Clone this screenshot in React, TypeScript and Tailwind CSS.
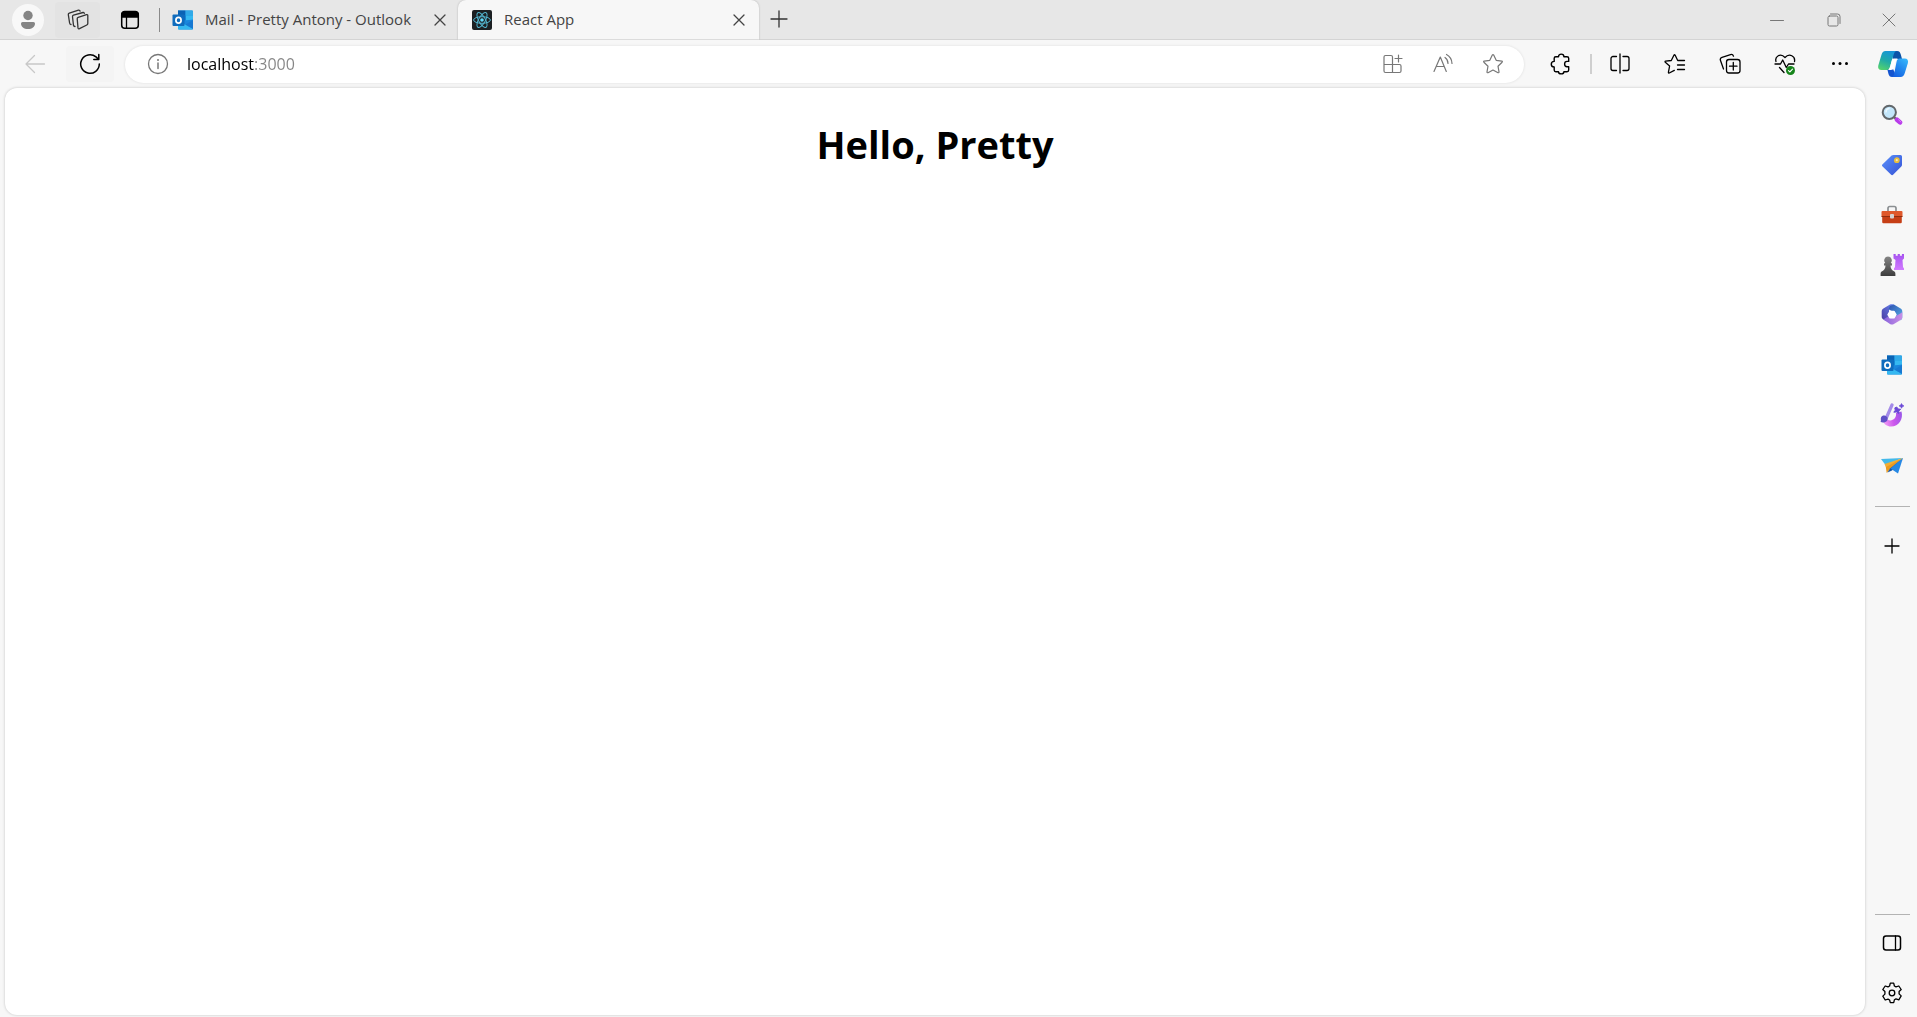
import type { ReactNode } from "react";

type IconProps = { size?: number; box?: string; className?: string; children: ReactNode };

function Icon({ size = 22, box = "0 0 22 22", className = "", children }: IconProps) {
  return (
    <svg
      width={size}
      height={size}
      viewBox={box}
      fill="none"
      stroke="currentColor"
      strokeWidth="1.3"
      strokeLinecap="round"
      strokeLinejoin="round"
      aria-hidden="true"
      className={`shrink-0 ${className}`}
    >
      {children}
    </svg>
  );
}

const STAR = "M11.700 2.100L14.200 7.300L19.800 8.100Q20.800 8.400 20.100 9.200L16 13.200L17 18.900Q17 20 16 19.700L11 17L6 19.700Q5 20 5 18.900L6 13.200L1.900 9.200Q1.200 8.400 2.200 8.100L7.800 7.300L10.300 2.100Q11 1 11.700 2.100z";

function OutlookIcon({ size = 22 }: { size?: number }) {
  return (
    <Icon size={size}>
      <g stroke="none">
        <path d="M6 1.500h14a1 1 0 0 1 1 1V12H6z" fill="#1490df" />
        <path d="M6 1.500h7.500v5H6z" fill="#0a63b5" />
        <path d="M13.500 1.500H20a1 1 0 0 1 1 1v4h-7.500z" fill="#32a9e7" />
        <path d="M13.500 6.500H21v5h-7.500z" fill="#35b8f1" />
        <path d="M6 6.500h7.500v5H6z" fill="#0a6ac0" />
        <path d="M21 10.500v9a1 1 0 0 1-1 1H7a1 1 0 0 1-1-1v-7z" fill="#1a86dc" />
        <path d="M6 11.500 21 20a1 1 0 0 1-1 .5H7a1 1 0 0 1-1-1z" fill="#35b8f1" />
        <path d="M13.500 15.500 21 11v8.800z" fill="#1779d2" />
        <rect x="0.500" y="5.500" width="12" height="11.500" rx="1" fill="#0f6cbd" />
      </g>
      <ellipse cx="6.500" cy="11.200" rx="2.600" ry="2.900" stroke="#fff" strokeWidth="1.700" />
    </Icon>
  );
}

function ReactLogo() {
  return (
    <svg width="20" height="20" viewBox="0 0 20 20" aria-hidden="true" className="shrink-0">
      <rect width="20" height="20" rx="2" fill="#1c2023" />
      <g fill="none" stroke="#53b5cf" strokeWidth="1">
        <ellipse cx="10" cy="10" rx="8.400" ry="3.300" />
        <ellipse cx="10" cy="10" rx="8.400" ry="3.300" transform="rotate(60 10 10)" />
        <ellipse cx="10" cy="10" rx="8.400" ry="3.300" transform="rotate(120 10 10)" />
      </g>
      <circle cx="10" cy="10" r="1.800" fill="#61dafb" />
    </svg>
  );
}

function CloseIcon() {
  return (
    <Icon size={12} box="0 0 12 12">
      <path d="M1 1l10 10M11 1L1 11" />
    </Icon>
  );
}

function CopilotIcon() {
  return (
    <svg width="32" height="28" viewBox="0 0 32 28" aria-hidden="true" className="shrink-0">
      <defs>
        <linearGradient id="cpA" x1="0.600" y1="0" x2="0.200" y2="1">
          <stop offset="0" stopColor="#1795d8" />
          <stop offset="0.500" stopColor="#20aaa8" />
          <stop offset="1" stopColor="#55d36c" />
        </linearGradient>
        <linearGradient id="cpB" x1="0.900" y1="0" x2="0.200" y2="1">
          <stop offset="0" stopColor="#37b8fb" />
          <stop offset="0.500" stopColor="#2388ee" />
          <stop offset="1" stopColor="#155fe0" />
        </linearGradient>
      </defs>
      <path d="M14 1h6c2.700 0 3.200 1.800 3.800 3.500L25 9h-9z" fill="#0b54a8" />
      <path d="M8 19h8l4 8h-5c-2 0-2.900-1-3.500-3L10.500 20z" fill="#1454cf" />
      <path d="M8.500 1H20c-2 0-2.700 1.600-3.300 3.600L13 17c-.6 2-1.600 3-3.500 3H4.500C1.800 20 .6 18.200 1.300 15.500L4.400 5C5.200 2.300 6.300 1 8.500 1z" fill="url(#cpA)" />
      <path d="M22.500 8.500h5.200c2.700 0 3.900 1.800 3.200 4.500l-3.100 10c-.8 2.700-2 4-4.300 4H14c2 0 2.600-1.600 3.200-3.600L19.500 12c.5-2.200 1.200-3.500 3-3.500z" fill="url(#cpB)" />
      <path d="M16.800 8.500h4c-1.500.7-2 2-2.500 4L17 17.500c-.6 1.700-1.500 2.500-3.200 2.500h-3c1.500-.7 2-2 2.500-4l1.200-4.800c.5-1.700 1-2.700 2.300-2.700z" fill="#fff" />
    </svg>
  );
}

function SearchTool() {
  return (
    <Icon>
      <path d="M13.500 13.500l2 2" stroke="#666" strokeWidth="2.400" />
      <path d="M16 15.700l3 2.700" stroke="#b83bea" strokeWidth="4.600" />
      <path d="M17.500 15.700l2.500 2.400" stroke="#dd79fb" strokeWidth="1" />
      <circle cx="8.300" cy="8.300" r="6.600" fill="#c3e6fa" stroke="#62676b" strokeWidth="2" />
      <path d="M5 8a3.500 3.500 0 0 1 3-3.400" stroke="#ebf8ff" strokeWidth="1.500" />
    </Icon>
  );
}

function ShoppingTool() {
  return (
    <Icon>
      <defs>
        <linearGradient id="tag" x1="0" y1="0" x2="1" y2="1">
          <stop offset="0" stopColor="#5b92fb" />
          <stop offset="1" stopColor="#3451d5" />
        </linearGradient>
      </defs>
      <path d="M12.500 1h7A1.500 1.500 0 0 1 21 2.500v8.200c0 .7-.2 1.200-.7 1.700l-8 8.200c-.8.7-1.600.7-2.400 0l-8.300-8c-.8-.8-.8-1.600 0-2.400l9-8.600c.5-.4 1-.6 1.900-.6z" fill="url(#tag)" stroke="none" />
      <circle cx="15.800" cy="6.200" r="2" fill="#f4e7bb" stroke="#e9be3c" strokeWidth="1.800" />
    </Icon>
  );
}

function ToolboxTool() {
  return (
    <Icon>
      <path d="M7 7V4.200A1.700 1.700 0 0 1 8.700 2.500h4.600A1.700 1.700 0 0 1 15 4.200V7" stroke="#8b8f92" strokeWidth="1.700" />
      <g stroke="none">
        <path d="M1.500 7h19a1 1 0 0 1 1 1v4.500H.5V8a1 1 0 0 1 1-1z" fill="#df582b" />
        <path d="M1.200 12.500h19.600V18a1.200 1.200 0 0 1-1.200 1.200H2.400A1.200 1.200 0 0 1 1.200 18z" fill="#c63f16" />
        <path d="M.5 12h21v1H.5z" fill="#912d0f" />
        <rect x="9" y="10" width="4" height="4.500" rx="1" fill="#d4d2d2" />
      </g>
    </Icon>
  );
}

function GamesTool() {
  return (
    <svg width="24" height="24" viewBox="0 0 24 24" aria-hidden="true">
      <defs>
        <linearGradient id="rook" x1="0" y1="0" x2="0" y2="1">
          <stop offset="0" stopColor="#a552ef" />
          <stop offset="1" stopColor="#d27bff" />
        </linearGradient>
        <linearGradient id="pawn" x1="0" y1="0" x2="0" y2="1">
          <stop offset="0" stopColor="#858585" />
          <stop offset="1" stopColor="#3d3d3d" />
        </linearGradient>
      </defs>
      <path d="M13.500 1h2.200v1.800h2V1h2.200v1.800h2V1H24v4.500l-1.500 1.500.5 7 1 1.500V17H14v-1.500l1-1.500.5-7L13.500 5.500z" fill="url(#rook)" />
      <path d="M8 3.500a3.900 3.900 0 0 1 2.800 6.600l1.200.5v1.800h-1.500c.1 2.400.8 4 2.500 5.300l1 .6c1 .6 1.400 1.400 1.400 2.800v1.900H.6v-1.900c0-1.400.4-2.200 1.400-2.800l1-.6c1.700-1.300 2.400-2.900 2.500-5.300H4v-1.800l1.200-.5A3.900 3.900 0 0 1 8 3.500z" fill="url(#pawn)" />
    </svg>
  );
}

function M365Tool() {
  return (
    <Icon>
      <defs>
        <linearGradient id="mA" x1="0" y1="1" x2="1" y2="0">
          <stop offset="0" stopColor="#4a3aa0" />
          <stop offset="1" stopColor="#6584ef" />
        </linearGradient>
        <linearGradient id="mB" x1="0" y1="0" x2="1" y2="1">
          <stop offset="0" stopColor="#2c4fae" />
          <stop offset="1" stopColor="#58b5ea" />
        </linearGradient>
        <linearGradient id="mC" x1="0" y1="0" x2="1" y2="0">
          <stop offset="0" stopColor="#8864dc" />
          <stop offset="1" stopColor="#c98fe6" />
        </linearGradient>
      </defs>
      <g stroke="none">
        <path d="M9 .6c1.200-.6 2.700-.6 3.900 0L8 5v8l-3.500 3.700-2-1.200C1.300 14.800.7 14 .7 12.700V7.500c0-1.300.6-2.300 1.700-3z" fill="url(#mA)" />
        <path d="M12.900.6l6.700 3.900c1.100.7 1.700 1.700 1.700 3v5.800c0 1.400-.6 2.300-1.600 3L14.400 13V9L7.500 5.300 9 2z" fill="url(#mB)" />
        <path d="M2.300 15.500l5.200-3.200 3.500 1.900 8.800-5 1.500-1.200v5c0 1.400-.6 2.300-1.700 3l-6.700 3.900c-1.200.7-2.700.7-3.900 0z" fill="url(#mC)" />
        <path d="M9 7.300h4l2 3.300-2 3.300H9l-2-3.300z" fill="#fff" stroke="#fff" />
      </g>
    </Icon>
  );
}

function DesignerTool() {
  return (
    <svg width="24" height="24" viewBox="0 0 24 24" aria-hidden="true">
      <defs>
        <linearGradient id="dsA" x1="0" y1="0.500" x2="1" y2="0.300">
          <stop offset="0" stopColor="#ef9bf5" />
          <stop offset="0.500" stopColor="#cd58ec" />
          <stop offset="1" stopColor="#9b56e8" />
        </linearGradient>
      </defs>
      <path d="M16 10l5.500-1.500C23.500 16 19 23.500 11 23.500c-4 0-7-2.300-8-5.500l4.500-1.500c3.500 2.500 9.500-.5 8.500-6.500z" fill="url(#dsA)" />
      <path d="M12 2L6.500 14.500" stroke="#a48be9" strokeWidth="3.200" strokeLinecap="round" />
      <path d="M4.500 12.500c2.500.3 4 3 2.700 5-1.500 2.200-5 2.500-6.700 1.300 1-1.200-.2-2.800.6-4.600.6-1.300 1.900-1.900 3.400-1.700z" fill="#5e50c6" />
      <path d="M16.700 4l1.500 2 2.500.3-1.900 1.600-.2 2.600-2.100-1.600-2.700.3 1.500-2-.5-2.300z" fill="#6b49d6" stroke="#6b49d6" />
      <path d="M21.500.5l.9 1.600 1.600.8-1.600.8-.9 1.600-.8-1.600-1.700-.8 1.700-.8z" fill="#6b49d6" stroke="#6b49d6" strokeWidth="0.600" />
    </svg>
  );
}

function DropTool() {
  return (
    <svg width="24" height="24" viewBox="0 0 24 24" aria-hidden="true">
      <path d="M23 5L5.500 12l1.200 8 4-4.500z" fill="#e99a20" />
      <path d="M23 5L10 15.500l-2.500 4 4.500-2z" fill="#1657a8" />
      <path d="M23 5L10.500 15.500 18 20.500z" fill="#2688e4" />
      <path d="M1 6l4.500 6L23 5z" fill="#44b9ea" />
      <path d="M4.500 11L23 5 6 14z" fill="#f5ad32" />
    </svg>
  );
}

const tools = [
  { name: "Search", icon: <SearchTool /> },
  { name: "Shopping", icon: <ShoppingTool /> },
  { name: "Tools", icon: <ToolboxTool /> },
  { name: "Games", icon: <GamesTool /> },
  { name: "Microsoft 365", icon: <M365Tool /> },
  { name: "Outlook", icon: <OutlookIcon /> },
  { name: "Designer", icon: <DesignerTool /> },
  { name: "Drop", icon: <DropTool /> },
];

const toolbarActions = [
  {
    name: "Split screen",
    icon: (
      <Icon>
        <path d="M7.500 3.500H4A2 2 0 0 0 2 5.500v10a2 2 0 0 0 2 2h3.500M14 3.500h4a2 2 0 0 1 2 2v10a2 2 0 0 1-2 2h-4M11 1v19" />
      </Icon>
    ),
  },
  {
    name: "Favorites",
    icon: (
      <Icon>
        <path d="M20.500 7.500h-6.800L11.200 2.300Q10.500 1.200 9.900 2.300L7.300 7.500l-5.700.7Q.6 8.500 1.300 9.300L5.600 13l-1.200 6.300Q4.400 20.300 5.300 20l5-2.600M13.500 12h7M13.500 16.500h7" />
      </Icon>
    ),
  },
  {
    name: "Collections",
    icon: (
      <Icon>
        <rect x="7.500" y="6.500" width="13.500" height="13.500" rx="2.500" />
        <path d="M14.300 9.500v7.500M10.500 13.200H18M4.500 16l-3-8.500A2.500 2.500 0 0 1 3 4.300l8.500-2.700c1.300-.4 2.500.2 3 1.600" />
      </Icon>
    ),
  },
  {
    name: "Browser essentials",
    icon: (
      <Icon>
        <path d="M2 8.500C.5 3.500 6.500-.5 11 4.500 15.500-.5 21.500 3.500 20.500 8.500M1 11h5.500l2.200-4 3.600 7.500L14.500 11H20M5.500 14.500l4.500 5" />
        <circle cx="16.500" cy="17.500" r="4.500" fill="#16851b" stroke="none" />
        <path d="M14.500 17.600l1.400 1.300 2.600-2.700" stroke="#fff" strokeWidth="1.200" />
      </Icon>
    ),
  },
  {
    name: "Settings and more",
    icon: (
      <Icon>
        <g fill="currentColor" stroke="none">
          <circle cx="4.500" cy="10.500" r="1.500" />
          <circle cx="11" cy="10.500" r="1.500" />
          <circle cx="17.500" cy="10.500" r="1.500" />
        </g>
      </Icon>
    ),
  },
];

function TitleBar() {
  return (
    <header className="flex h-10 shrink-0 items-center border-b border-[#d4d4d4] bg-[#e7e7e7] text-[#333]">
      <button aria-label="Profile" className="ml-3 flex size-8 items-center justify-center rounded-full bg-[#f8f8f8]">
        <svg width="16" height="20" viewBox="0 0 16 20" fill="#858585" aria-hidden="true">
          <circle cx="8" cy="5.500" r="4.700" />
          <path d="M2.500 12h11A1.500 1.500 0 0 1 15 13.500C15 17 12 19 8 19s-7-2-7-5.500A1.500 1.500 0 0 1 2.500 12z" />
        </svg>
      </button>
      <button aria-label="Workspaces" className="ml-[11px] flex h-9 w-[45px] items-center justify-center rounded bg-[#e3e3e3]">
        <Icon>
          <path d="M11.200 8.300l8.300-2.600q1.300-.3 1.300 1v7.800q0 1-1 1.500l-7.300 3.700q-1.300.5-1.500-.8l-.8-9.200q0-1 1-1.400zM6.500 16.500l-1-8.800q0-1.100 1-1.500L16 3.500M8 17.500q-1.300-.1-1.500-1M2.600 14L1.300 5.700Q1.200 4.500 2.300 4.100L11.500 1.200q1.300-.2 1.600 1M4 15.500q-1.200-.2-1.400-1.500M16 3.300q1-.1 1.300 1" />
        </Icon>
      </button>
      <button aria-label="Tab actions" className="ml-2 flex h-9 w-11 items-center justify-center text-black">
        <Icon size={20} box="0 0 20 20">
          <rect x="1.700" y="1.700" width="16.600" height="16.600" rx="3" strokeWidth="1.500" />
          <path d="M1.700 7V4.500a3 3 0 0 1 3-3h10.600a3 3 0 0 1 3 3V7z" fill="currentColor" />
          <path d="M6.500 7v11" />
        </Icon>
      </button>
      <div className="ml-[7px] h-6 w-px bg-[#8a8a8a]" />
      <nav aria-label="Tabs" className="flex h-10 items-start text-[15px] text-[#444]">
        <div className="flex h-10 w-[298px] items-center pr-3 pl-3">
          <OutlookIcon />
          <a href="#mail" className="ml-[11px] flex-1 whitespace-nowrap">
            Mail - Pretty Antony - Outlook
          </a>
          <button aria-label="Close Mail tab">
            <CloseIcon />
          </button>
        </div>
        <div className="flex h-10 w-[301px] items-center rounded-t-lg bg-[#f7f7f7] pr-3.5 pl-3.5 shadow-[0_0_2px_#00000040] [clip-path:inset(-3px_-3px_0_-3px)]">
          <ReactLogo />
          <a href="#app" aria-current="page" className="ml-3 flex-1 whitespace-nowrap">
            React App
          </a>
          <button aria-label="Close React App tab">
            <CloseIcon />
          </button>
        </div>
      </nav>
      <button aria-label="New tab" className="ml-[11px] pb-0.5">
        <Icon size={18} box="0 0 18 18">
          <path d="M9 1v16M1 9h16" />
        </Icon>
      </button>
      <div className="ml-auto flex text-[#777]">
        <button aria-label="Minimize" className="flex h-9 w-[57px] items-center justify-center">
          <Icon size={14} box="0 0 14 14">
            <path d="M.5 7.500h13" strokeWidth="1" />
          </Icon>
        </button>
        <button aria-label="Restore" className="flex h-9 w-[57px] items-center justify-center">
          <Icon size={14} box="0 0 14 14">
            <rect x="1" y="3" width="10" height="10" rx="1.500" strokeWidth="1" />
            <path d="M3.500 1h7A2.500 2.500 0 0 1 13 3.500v7" strokeWidth="1" />
          </Icon>
        </button>
        <button aria-label="Close window" className="mr-px flex h-9 w-[54px] items-center justify-center">
          <Icon size={14} box="0 0 14 14">
            <path d="M1 1l12 12M13 1L1 13" strokeWidth="1" />
          </Icon>
        </button>
      </div>
    </header>
  );
}

function Toolbar() {
  return (
    <div className="flex h-12 shrink-0 items-center text-black">
      <button aria-label="Back" disabled className="ml-[11px] flex h-9 w-12 items-center justify-center text-[#c8c8c8]">
        <Icon>
          <path d="M20.500 11H2M10.500 2.500L2 11l8.500 8.500" />
        </Icon>
      </button>
      <button aria-label="Refresh" className="ml-[7px] flex h-9 w-12 items-center justify-center rounded bg-[#f4f4f4]">
        <Icon>
          <path d="M20.300 11a9.300 9.300 0 1 1-3.300-7.100L19.500 6.300M19.800 1.500v5h-5" strokeWidth="1.500" />
        </Icon>
      </button>
      <div className="ml-[11px] flex h-[37px] flex-1 items-center rounded-full bg-white pr-5 pl-[22px] text-[#777] shadow-[0_0_3px_#0000001c]">
        <button aria-label="Site information">
          <Icon>
            <circle cx="11" cy="11" r="9.500" />
            <path d="M11 10v5.500" strokeWidth="1.500" />
            <circle cx="11" cy="7" r="1" fill="currentColor" stroke="none" />
          </Icon>
        </button>
        <input
          aria-label="Address"
          defaultValue="localhost:3000"
          className="ml-[18px] min-w-0 flex-1 bg-[linear-gradient(to_right,#000_67px,#858585_67px)] bg-clip-text text-base text-transparent caret-black outline-none"
        />
        <div className="flex items-center gap-7">
          <button aria-label="Apps">
            <Icon>
              <path d="M10.500 19.500V4A1.500 1.500 0 0 0 9 2.500H3.500A1.500 1.500 0 0 0 2 4v14a1.500 1.500 0 0 0 1.500 1.500h14A1.500 1.500 0 0 0 19 18v-5a1.500 1.500 0 0 0-1.500-1.500H2M16.500 2v7M13 5.500h7" strokeWidth="1.200" />
            </Icon>
          </button>
          <button aria-label="Read aloud">
            <Icon>
              <path d="M2 18.500L8.300 4l6 14.500M4.300 13.500h8M13 4.500c2 1.300 3 3.300 3 6M14.500 1.500c3.500 1.800 5.300 5 5.500 9" strokeWidth="1.200" />
            </Icon>
          </button>
          <button aria-label="Add to favorites">
            <Icon>
              <path d={STAR} strokeWidth="1.200" />
            </Icon>
          </button>
        </div>
      </div>
      <button aria-label="Extensions" className="ml-[9px] flex h-9 w-[54px] items-center justify-center">
        <Icon>
          <path
            d="M9.500 3.700C9.500 .3 14.900.3 14.900 3.700H18Q19.700 3.700 19.700 5.300V8.400H18C14.800 8.400 14.800 13.800 18 13.800H19.700V17Q19.700 18.700 18 18.700H14.900C14.900 21.600 9.500 21.600 9.500 18.700H6.800Q5.200 18.700 5.200 17V14C1.300 14 1.300 8.400 5.200 8.400V5.300Q5.200 3.700 6.800 3.700z"
            strokeWidth="1.400"
          />
        </Icon>
      </button>
      <div className="ml-[3px] h-5 w-0.5 bg-[#cfcfcf]" />
      <div className="flex">
        {toolbarActions.map((action) => (
          <button key={action.name} aria-label={action.name} className="flex h-9 w-[55px] items-center justify-center">
            {action.icon}
          </button>
        ))}
      </div>
    </div>
  );
}

function Sidebar() {
  return (
    <aside className="flex w-[50px] shrink-0 flex-col items-center text-black">
      <button aria-label="Copilot" className="mb-0.5 flex h-12 w-full items-center justify-center pl-0.5">
        <CopilotIcon />
      </button>
      {tools.map((tool) => (
        <button key={tool.name} aria-label={tool.name} className="flex h-[50px] w-full items-center justify-center">
          {tool.icon}
        </button>
      ))}
      <hr className="mt-4 w-[35px] border-[#b3b3b3]" />
      <button aria-label="Customize" className="mt-[15px] flex h-12 w-full items-center justify-center">
        <Icon size={16} box="0 0 16 16">
          <path d="M8 1v14M1 8h14" />
        </Icon>
      </button>
      <hr className="mt-auto w-[35px] border-[#b3b3b3]" />
      <button aria-label="Hide sidebar" className="mt-[3px] flex h-[50px] w-full items-center justify-center">
        <Icon>
          <rect x="2.500" y="4" width="17" height="14" rx="2.500" strokeWidth="1.500" />
          <path d="M14.500 4v14" />
        </Icon>
      </button>
      <button aria-label="Settings" className="flex h-[49px] w-full items-center justify-center">
        <Icon>
          <circle cx="11" cy="11" r="2.800" />
          <path d="M9.300 1.200h3.400l.7 2.800 1.600.9 2.800-.9 2.400 3.500-2.100 2v2.400l2.100 2-2.400 3.900-2.800-.9-1.600.9-.7 2.800H9.300L8.600 18 7 17.100l-2.800.9-2.400-3.900 2.100-2V9.500l-2.100-2L4.200 4l2.800.9L8.600 4z" />
        </Icon>
      </button>
    </aside>
  );
}

export default function App() {
  return (
    <div className="flex h-screen flex-col overflow-hidden bg-[#f7f7f7] font-['Open_Sans','Noto_Sans',sans-serif]">
      <TitleBar />
      <div className="flex min-h-0 flex-1">
        <div className="flex min-w-0 flex-1 flex-col">
          <Toolbar />
          <main className="mr-0.5 mb-0.5 ml-[5px] flex-1 rounded-xl bg-white pt-7 text-center shadow-[0_0_3px_#00000038]">
            <h1 className="text-[38px] leading-[56px] font-bold text-black">Hello, Pretty</h1>
          </main>
        </div>
        <Sidebar />
      </div>
    </div>
  );
}
